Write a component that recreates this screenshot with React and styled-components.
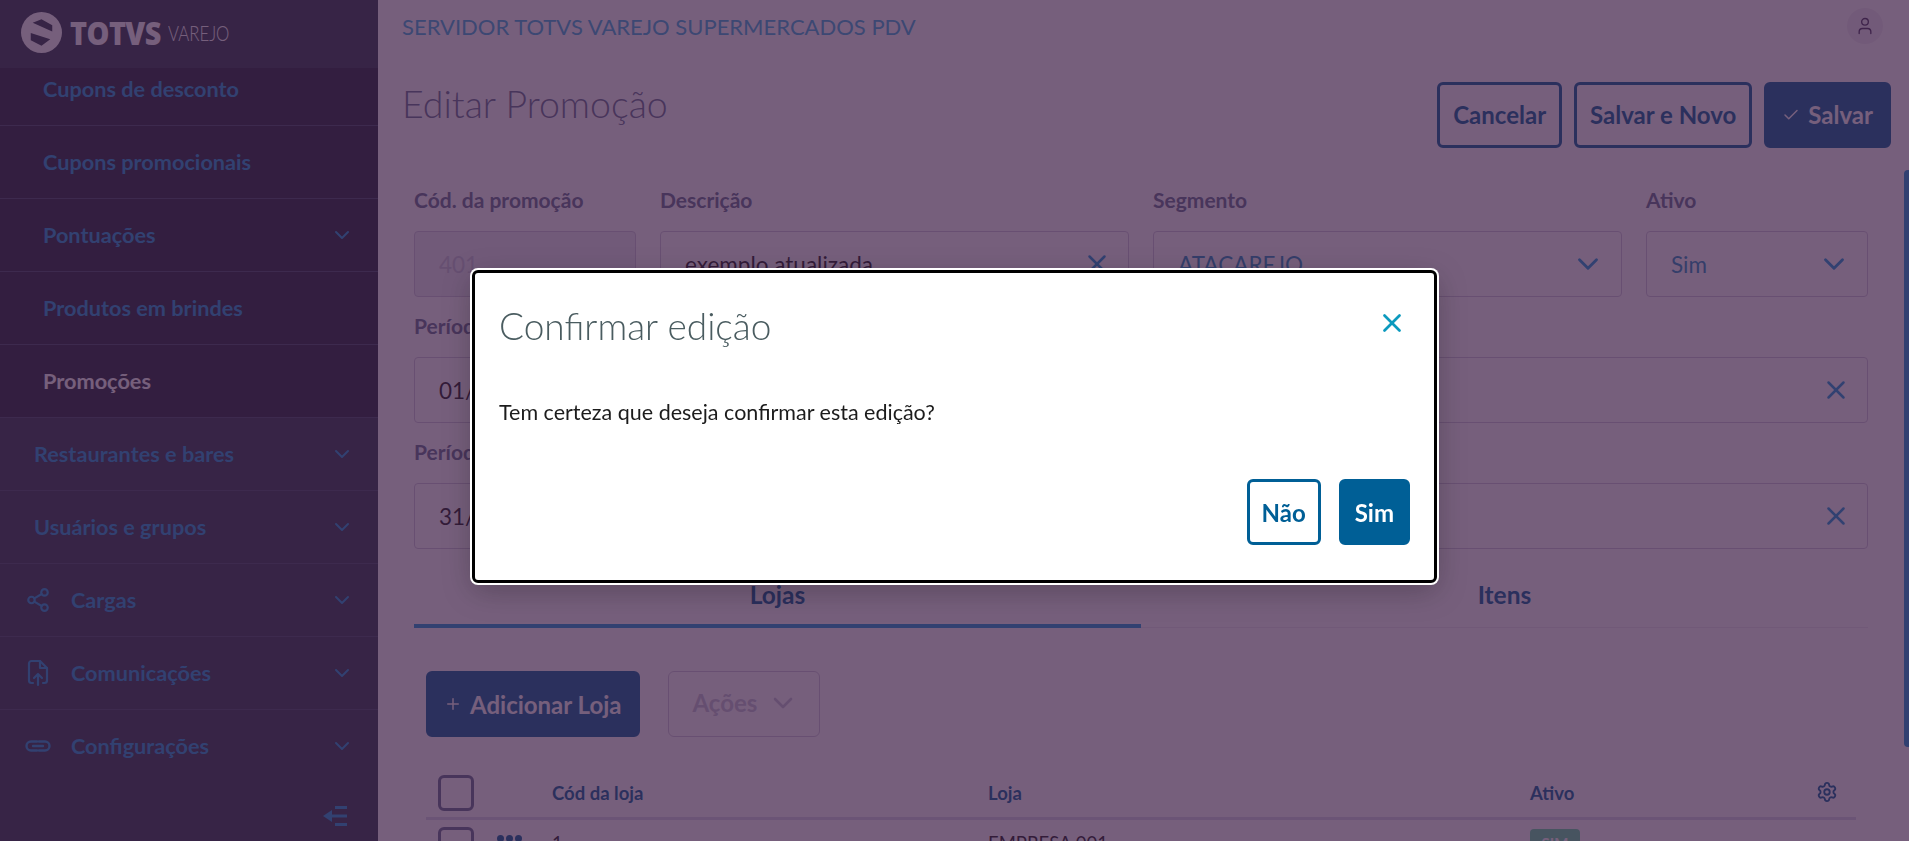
import React from 'react';
import styled, { createGlobalStyle } from 'styled-components';
import { ChevronDown, Check, Plus, Settings, Share2, User, X } from 'lucide-react';

const PRIMARY = '#005f96';
const LINK = '#1898d8';
const INK = '#65708f';
const LINE = '#cfcadb';

const GlobalStyle = createGlobalStyle`
  html, body { margin: 0; height: 100%; overflow: hidden; background: #fff; }
  * { box-sizing: border-box; }
  body { font-family: Lato, "Noto Sans", sans-serif; color: #1c1c1c; }
`;

const Shell = styled.div`display: flex; height: 100vh; overflow: hidden;`;

const Sidebar = styled.aside`display: flex; flex-direction: column; flex: 0 0 378px; background: #293647;`;
const Brand = styled.div`display: flex; align-items: center; flex: 0 0 68px; padding: 0 0 3px 21px; color: #fff;`;
const BrandName = styled.span`font-family: "Open Sans", sans-serif; font-weight: 800; font-size: 32px; letter-spacing: -.6px; margin-left: 8px; width: 98px; transform: scaleX(.9); transform-origin: left;`;
const BrandSub = styled.span`font-weight: 300; font-size: 21px; transform: scaleX(.8); transform-origin: left;`;
const MenuArea = styled.nav`flex: 1; overflow: hidden;`;
const MenuList = styled.div`margin-top: -15px;`;
const MenuRow = styled.div`
  display: flex; align-items: center; height: 73px; padding-left: ${(p) => p.$indent}px; padding-right: 24px;
  border-bottom: 1px solid #3f4b63;
  background: ${(p) => (p.$nested ? '#1b2533' : 'transparent')};
  color: ${(p) => (p.$active ? '#fff' : LINK)};
  font-weight: 700; font-size: 21.7px;
  svg.chev { margin-left: auto; }
`;
const MenuIcon = styled.span`display: flex; justify-content: center; width: 26px; margin-right: 20px;`;
const Collapse = styled.div`display: flex; justify-content: flex-end; align-items: center; flex: 0 0 59px; padding: 8px 30px 0 0; color: ${LINK};`;

const Main = styled.main`flex: 1; min-width: 0; display: flex; flex-direction: column; position: relative; overflow: hidden;`;
const TopBar = styled.header`display: flex; align-items: center; justify-content: space-between; flex: 0 0 52px; padding: 0 26px 0 24px;`;
const ServerName = styled.span`font-size: 22px; font-weight: 400; color: #3ab0e0;`;
const Avatar = styled.span`display: flex; align-items: center; justify-content: center; width: 36px; height: 36px; border-radius: 50%; background: #f1eff3; color: #44345a;`;
const TitleRow = styled.div`display: flex; align-items: center; justify-content: space-between; margin-top: 29px; padding: 0 18px 0 24px;`;
const PageTitle = styled.h1`margin: 0 0 22px; font-size: 37.5px; font-weight: 300; color: ${INK};`;
const Actions = styled.div`display: flex; gap: 12px;`;
const Btn = styled.button`
  display: inline-flex; align-items: center; justify-content: center; gap: 8px; height: 66px; padding: 0 ${(p) => p.$pad || 13}px;
  border-radius: 6px; border: 3px solid ${PRIMARY};
  background: ${(p) => (p.$solid ? PRIMARY : '#fff')};
  color: ${(p) => (p.$solid ? '#fff' : PRIMARY)};
  font: 700 24px Lato, sans-serif; white-space: nowrap;
`;

const Form = styled.section`display: flex; flex-direction: column; gap: 17px; margin-top: 40px; padding: 0 41px 0 36px;`;
const FieldRow = styled.div`display: grid; grid-template-columns: ${(p) => p.$cols}; gap: 24px;`;
const Field = styled.div`display: flex; flex-direction: column; gap: 19px;`;
const Label = styled.label`font-size: 21px; line-height: 24px; font-weight: 700; color: ${INK};`;
const Control = styled.div`
  display: flex; align-items: center; justify-content: space-between; height: 66px; padding: 0 24px; border-radius: 4px;
  border: 1px solid ${LINE}; background: ${(p) => (p.$disabled ? '#eceef5' : '#fff')};
  color: ${(p) => (p.$disabled ? '#c9c9da' : p.$blue ? '#1f8fc0' : '#1c1c1c')};
  font-size: 22.5px;
  svg { color: ${LINK}; margin-right: -8px; }
`;

const Tabs = styled.div`display: grid; grid-template-columns: 1fr 1fr; margin: 15px 41px 0 36px;`;
const Tab = styled.div`
  height: 64px; padding-top: 17px; text-align: center; font-size: 24.5px; font-weight: 700; color: ${PRIMARY};
  border-bottom: ${(p) => (p.$active ? `4px solid ${LINK}` : `1px solid #eceaf0`)};
  line-height: 28px;
`;

const Toolbar = styled.div`display: flex; gap: 28px; margin-top: 43px; padding-left: 48px;`;
const DisabledBtn = styled(Btn)`border-width: 1px; border-color: ${LINE}; background: #fff; color: #c6c6d6; padding: 0 20px 3px 24px; gap: 10px;`;

const Table = styled.div`margin: 38px 53px 0 48px;`;
const TableRow = styled.div`
  display: grid; grid-template-columns: 126px 436px 542px 1fr 60px; align-items: start;
  font-size: 18.5px;
  color: ${(p) => (p.$head ? PRIMARY : '#1c1c1c')}; font-weight: ${(p) => (p.$head ? 700 : 400)};
  ${(p) => p.$head && 'border-bottom: 3px solid #d8d8ea; height: 45px; margin-bottom: 7px;'}
`;
const CheckCell = styled.div`display: flex; align-items: center; gap: 23px; padding-left: 12px;`;
const Box = styled.span`flex: none; width: 36px; height: 36px; border-radius: 6px; border: 3px solid ${INK}; background: #fff;`;
const Dots = styled.span`display: flex; gap: 2px; align-self: flex-start; margin-top: 8px;`;
const Dot = styled.i`width: 7px; height: 7px; border-radius: 50%; background: ${PRIMARY};`;
const HeadCell = styled.div`line-height: 36px;`;
const BodyCell = styled.div`padding-top: 5px;`;
const GearCell = styled(HeadCell)`display: flex; justify-content: flex-end; padding-right: 18px; padding-top: 6px; svg { display: block; }`;
const Badge = styled.span`display: inline-block; width: 50px; height: 34px; line-height: 28px; border-radius: 4px; background: #60d8a0; color: #fff; text-align: center; font-size: 15px; font-weight: 700; margin-top: 2px;`;

const ScrollThumb = styled.div`position: absolute; right: 0; top: 170px; width: 5px; height: 577px; border-radius: 4px 0 0 4px; background: ${LINK};`;

const Overlay = styled.div`position: fixed; inset: 0; z-index: 10; display: flex; align-items: center; justify-content: center; padding-top: 12px; background: rgba(61, 28, 69, .706);`;
const Modal = styled.div`
  display: flex; flex-direction: column; width: 965px; height: 313px; padding: 0 24px 0 24px; border-radius: 6px; background: #fff;
  border: 3px solid #000; box-shadow: 0 0 0 2px #fff, 0 8px 30px rgba(0,0,0,.25);
`;
const ModalHead = styled.div`display: flex; align-items: center; justify-content: space-between; height: 104px;`;
const ModalTitle = styled.h2`margin: 0; font-size: 37px; font-weight: 300; color: #4a5c60;`;
const CloseBtn = styled.span`display: flex; color: #0c9abe; margin-right: 3px; margin-bottom: 5px;`;
const ModalText = styled.p`margin: 22px 0 0; font-size: 21.5px; line-height: 26px; color: #1c1c1c;`;
const ModalFoot = styled.div`display: flex; justify-content: flex-end; gap: 18px; margin-top: auto; padding-bottom: 35px;`;

const LinkGlyph = () => (
  <svg width="26" height="26" viewBox="0 0 26 26" fill="none" stroke="currentColor" strokeWidth="2.4" strokeLinecap="round">
    <path d="M12 8.5H6a4.5 4.5 0 0 0 0 9h6" />
    <path d="M14 8.5h6a4.5 4.5 0 0 1 0 9h-6" />
    <path d="M8 13h10" />
  </svg>
);

const FileGlyph = () => (
  <svg width="26" height="28" viewBox="0 0 26 28" fill="none" stroke="currentColor" strokeWidth="2.2" strokeLinecap="round" strokeLinejoin="round">
    <path d="M8 24H6.5A2.5 2.5 0 0 1 4 21.5v-17A2.5 2.5 0 0 1 6.5 2H15l7 7v12.5a2.5 2.5 0 0 1-2.5 2.5H18" />
    <path d="M15 2v7h7" />
    <path d="M13 26V15M9 19l4-4 4 4" />
  </svg>
);

const CollapseGlyph = () => (
  <svg width="26" height="20" viewBox="0 0 26 20" fill="none" stroke="currentColor" strokeWidth="3">
    <path d="M13 1.500h12M8 10h17M13 18.500h12" />
    <path d="M10 4 1 10l9 6Z" fill="currentColor" strokeWidth="0" />
  </svg>
);

const TotvsMark = () => (
  <svg width="41" height="41" viewBox="0 0 42 42">
    <circle cx="21" cy="21" r="21" fill="currentColor" />
    <path d="M12 11 21 7.500 32 13.500V20Z" fill="#293647" />
    <path d="M10 21.500 30 28 21 34.500 10 29Z" fill="#293647" />
  </svg>
);

const menu = [
  { label: 'Cupons de desconto', indent: 43, nested: true },
  { label: 'Cupons promocionais', indent: 43, nested: true },
  { label: 'Pontuações', indent: 43, nested: true, chev: true },
  { label: 'Produtos em brindes', indent: 43, nested: true },
  { label: 'Promoções', indent: 43, nested: true, active: true },
  { label: 'Restaurantes e bares', indent: 34, chev: true },
  { label: 'Usuários e grupos', indent: 34, chev: true },
  { label: 'Cargas', indent: 25, chev: true, icon: <Share2 size={26} strokeWidth={2} /> },
  { label: 'Comunicações', indent: 25, chev: true, icon: <FileGlyph /> },
  { label: 'Configurações', indent: 25, chev: true, icon: <LinkGlyph /> },
];

export default function App() {
  return (
    <Shell>
      <GlobalStyle />
      <Sidebar>
        <Brand>
          <TotvsMark />
          <BrandName>TOTVS</BrandName>
          <BrandSub>VAREJO</BrandSub>
        </Brand>
        <MenuArea>
          <MenuList>
            {menu.map((item) => (
              <MenuRow key={item.label} $indent={item.indent} $nested={item.nested} $active={item.active}>
                {item.icon && <MenuIcon>{item.icon}</MenuIcon>}
                {item.label}
                {item.chev && <ChevronDown className="chev" size={24} strokeWidth={2} />}
              </MenuRow>
            ))}
          </MenuList>
        </MenuArea>
        <Collapse><CollapseGlyph /></Collapse>
      </Sidebar>

      <Main>
        <TopBar>
          <ServerName>SERVIDOR TOTVS VAREJO SUPERMERCADOS PDV</ServerName>
          <Avatar><User size={20} strokeWidth={1.6} /></Avatar>
        </TopBar>
        <TitleRow>
          <PageTitle>Editar Promoção</PageTitle>
          <Actions>
            <Btn>Cancelar</Btn>
            <Btn>Salvar e Novo</Btn>
            <Btn $solid $pad={15}><Check size={18} />Salvar</Btn>
          </Actions>
        </TitleRow>

        <Form>
          <FieldRow $cols="222px 469px 469px 222px">
            <Field>
              <Label>Cód. da promoção</Label>
              <Control $disabled>401</Control>
            </Field>
            <Field>
              <Label>Descrição</Label>
              <Control>exemplo atualizada<X size={30} /></Control>
            </Field>
            <Field>
              <Label>Segmento</Label>
              <Control $blue>ATACAREJO<ChevronDown size={34} /></Control>
            </Field>
            <Field>
              <Label>Ativo</Label>
              <Control $blue>Sim<ChevronDown size={34} /></Control>
            </Field>
          </FieldRow>
          <FieldRow $cols="1fr">
            <Field>
              <Label>Período inicial</Label>
              <Control>01/01/2024<X size={30} /></Control>
            </Field>
          </FieldRow>
          <FieldRow $cols="1fr">
            <Field>
              <Label>Período final</Label>
              <Control>31/12/2024<X size={30} /></Control>
            </Field>
          </FieldRow>
        </Form>

        <Tabs>
          <Tab $active>Lojas</Tab>
          <Tab>Itens</Tab>
        </Tabs>

        <Toolbar>
          <Btn $solid $pad={15}><Plus size={18} />Adicionar Loja</Btn>
          <DisabledBtn>Ações<ChevronDown size={32} /></DisabledBtn>
        </Toolbar>

        <Table>
          <TableRow $head>
            <CheckCell><Box /></CheckCell>
            <HeadCell>Cód da loja</HeadCell>
            <HeadCell>Loja</HeadCell>
            <HeadCell>Ativo</HeadCell>
            <GearCell><Settings size={22} /></GearCell>
          </TableRow>
          <TableRow>
            <CheckCell>
              <Box />
              <Dots><Dot /><Dot /><Dot /></Dots>
            </CheckCell>
            <BodyCell>1</BodyCell>
            <BodyCell>EMPRESA 001</BodyCell>
            <div><Badge>SIM</Badge></div>
            <div />
          </TableRow>
        </Table>
        <ScrollThumb />
      </Main>

      <Overlay>
        <Modal>
          <ModalHead>
            <ModalTitle>Confirmar edição</ModalTitle>
            <CloseBtn><X size={30} strokeWidth={2.2} /></CloseBtn>
          </ModalHead>
          <ModalText>Tem certeza que deseja confirmar esta edição?</ModalText>
          <ModalFoot>
            <Btn $pad={12}>Não</Btn>
            <Btn $solid>Sim</Btn>
          </ModalFoot>
        </Modal>
      </Overlay>
    </Shell>
  );
}
